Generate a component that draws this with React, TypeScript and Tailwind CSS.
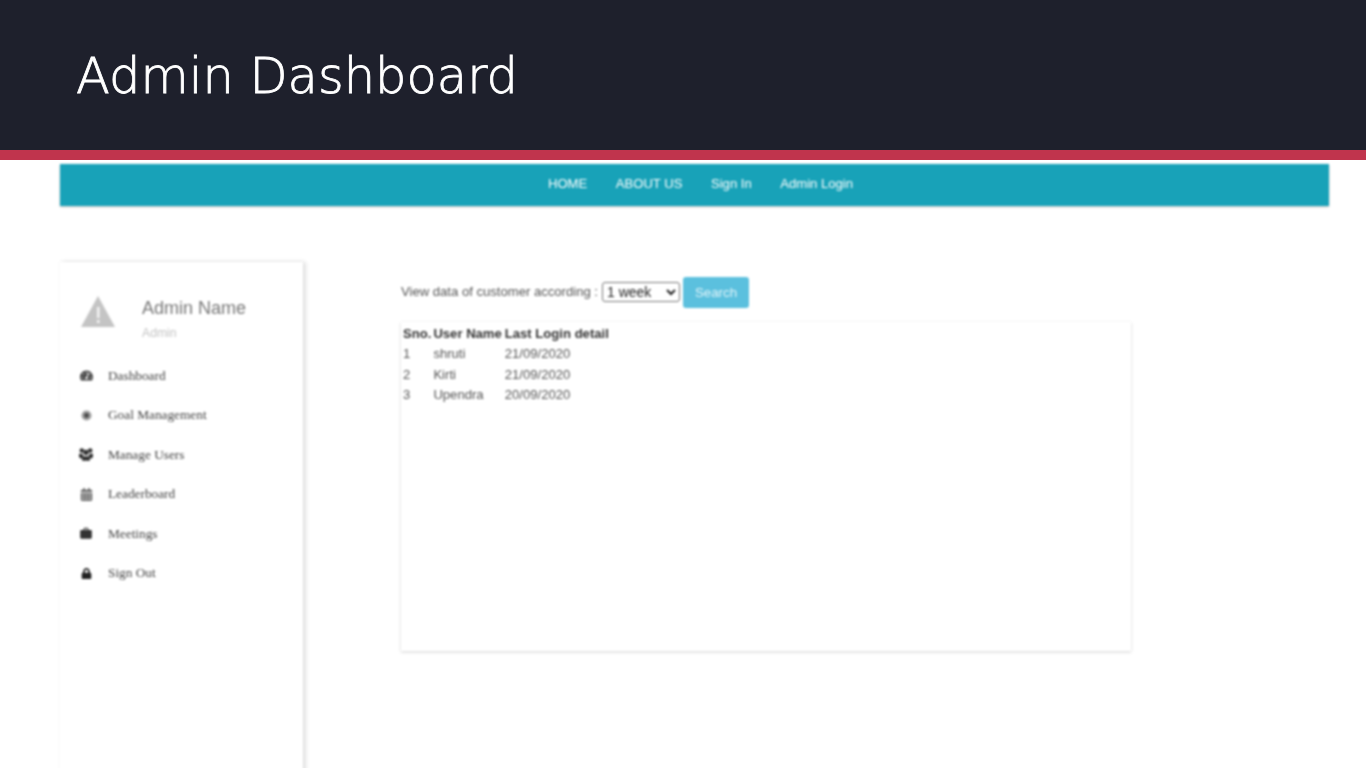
import { FaTachometerAlt, FaCalendarAlt, FaLock } from 'react-icons/fa';
import { MdWork } from 'react-icons/md';

function GoalIcon({ size }: { size: number }) {
  return (
    <svg viewBox="0 0 12 12" width={size} height={size}>
      <circle cx="6" cy="6" r="5.5" fill="#a0a0a0" />
      <circle cx="6" cy="6" r="2.6" fill="#4a4a4a" />
    </svg>
  );
}

function UsersIcon({ size }: { size: number }) {
  return (
    <svg viewBox="0 0 16 15" width={size} height={size} fill="currentColor">
      <circle cx="3.2" cy="3" r="2.6" />
      <circle cx="12.8" cy="3" r="2.6" />
      <circle cx="8" cy="5.2" r="3" />
      <path d="M0 6.5h4l1 3.5v2H1.5L0 10zM16 6.5h-4l-1 3.5v2h3.5L16 10z" />
      <path d="M4 9.5h8l.5 5h-9z" />
    </svg>
  );
}

const menu = [
  { label: 'Dashboard', icon: FaTachometerAlt, size: 13, color: 'text-[#444]' },
  { label: 'Goal Management', icon: GoalIcon, size: 11, color: 'text-[#666]' },
  { label: 'Manage Users', icon: UsersIcon, size: 15, color: 'text-[#333]' },
  { label: 'Leaderboard', icon: FaCalendarAlt, size: 13, color: 'text-[#666]' },
  { label: 'Meetings', icon: MdWork, size: 15, color: 'text-[#333]' },
  { label: 'Sign Out', icon: FaLock, size: 11, color: 'text-[#222]' },
];

const rows = [
  { sno: '1', name: 'shruti', date: '21/09/2020' },
  { sno: '2', name: 'Kirti', date: '21/09/2020' },
  { sno: '3', name: 'Upendra', date: '20/09/2020' },
];

export default function App() {
  return (
    <div className="h-[768px] overflow-hidden bg-white font-['Liberation_Sans',sans-serif]">
      {/* Slide title */}
      <header className="h-[160px] border-b-[10px] border-[#c0344d] bg-[#1e202c] pl-[76px] pt-[43px]">
        <h1 className="font-['DejaVu_Sans',sans-serif] text-[49.5px] font-extralight leading-[66px] text-white [-webkit-text-stroke:0.8px_white]">Admin Dashboard</h1>
      </header>

      {/* Blurry screenshot of the app */}
      <div className="pl-[60px] pr-[37px] pt-[4px] blur-[0.8px]">
        <nav className="flex h-[42px] items-center justify-center gap-[28.5px] bg-[#18a2b8] pb-[3px] pl-[12px] text-[13.1px] text-white shadow-[0_1px_2px_rgba(0,0,0,0.25)]">
          <a>HOME</a>
          <a>ABOUT US</a>
          <a>Sign In</a>
          <a>Admin Login</a>
        </nav>

        <div className="mt-[56px] flex">
          <aside className="h-[520px] w-[243px] shrink-0 bg-white shadow-[3px_0_4px_rgba(0,0,0,0.12),0_-1px_3px_rgba(0,0,0,0.06)]">
            <div className="flex pl-[21px] pt-[33px]">
              <svg viewBox="0 0 34 31" className="mt-[1px] h-[31px] w-[34px]">
                <path d="M17 0 L34 31 H0 Z" fill="#c4c4c4" />
                <rect x="16" y="11" width="2.5" height="11" fill="#f4f4f4" />
                <rect x="16" y="24" width="2.5" height="3" fill="#f4f4f4" />
              </svg>
              <div className="ml-[27px]">
                <div className="text-[18px] leading-[26px] text-[#777]">Admin Name</div>
                <div className="mt-[4px] text-[12.2px] leading-[16px] text-[#c4c4c4]">Admin</div>
              </div>
            </div>
            <ul className="mt-[15px] pl-[19px] font-['Liberation_Serif',serif] text-[13.3px] text-[#444]">
              {menu.map((item) => (
                <li key={item.label} className="flex h-[39.5px] items-center">
                  <span className={`flex w-[14px] justify-center ${item.color}`}>
                    <item.icon size={item.size} />
                  </span>
                  <span className="ml-[15px]">{item.label}</span>
                </li>
              ))}
            </ul>
          </aside>

          <main className="ml-[98px] pt-[15px]">
            <div className="flex items-center text-[13.1px] text-[#555]">
              <span className="mb-[2px]">View data of customer according :</span>
              <select className="mb-[2px] ml-[4px] h-[20px] w-[78px] rounded-[3px] border border-[#777] bg-white text-[14px] text-[#222]">
                <option>1 week</option>
              </select>
              <button className="ml-[3px] h-[31px] w-[66px] rounded-[3px] bg-[#5bc0de] text-[13.3px] text-[#e4f5fa]">Search</button>
            </div>
            <div className="mt-[14px] h-[329px] w-[730px] bg-white pl-[2px] pt-[1px] shadow-[0_1px_3px_rgba(0,0,0,0.18)]">
              <table className="text-[13.1px] text-[#555]">
                <thead>
                  <tr className="h-[21px] text-left text-[#333]">
                    <th className="pr-[2px] font-bold">Sno.</th>
                    <th className="pr-[3px] font-bold">User Name</th>
                    <th className="font-bold">Last Login detail</th>
                  </tr>
                </thead>
                <tbody>
                  {rows.map((row) => (
                    <tr key={row.sno} className="h-[20.5px]">
                      <td>{row.sno}</td>
                      <td>{row.name}</td>
                      <td>{row.date}</td>
                    </tr>
                  ))}
                </tbody>
              </table>
            </div>
          </main>
        </div>
      </div>
    </div>
  );
}
